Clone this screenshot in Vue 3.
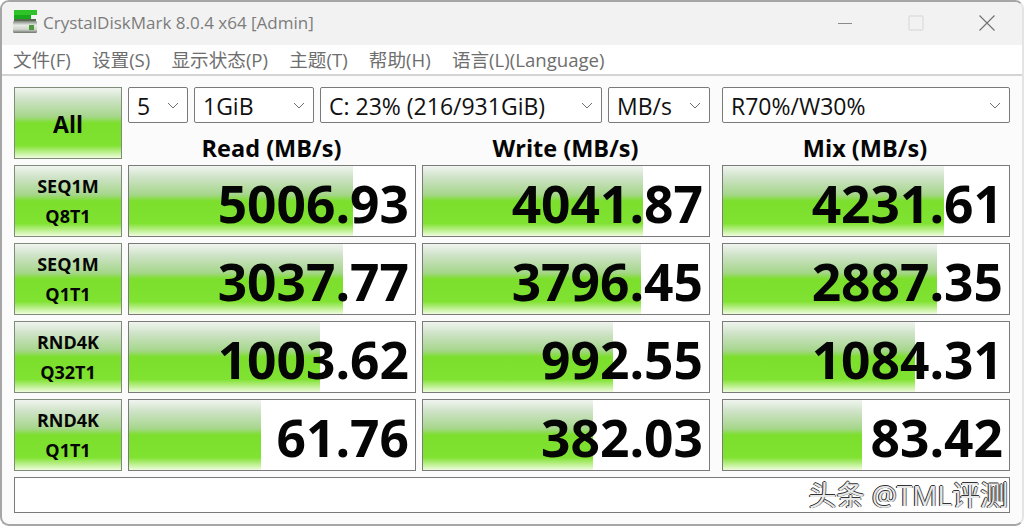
<template>
    <div class="window">
        <div class="titlebar">
            <svg class="appicon" width="26" height="24" viewBox="0 0 26 24">
                <defs>
                    <linearGradient id="drive" x1="0" y1="0" x2="0" y2="1">
                        <stop offset="0" stop-color="#7d857a" />
                        <stop offset="0.35" stop-color="#e8ebe6" />
                        <stop offset="0.7" stop-color="#cfd4cc" />
                        <stop offset="1" stop-color="#6f756d" />
                    </linearGradient>
                </defs>
                <rect x="0" y="11" width="24" height="12" rx="1.5" fill="url(#drive)" />
                <rect x="16" y="15" width="5" height="5" fill="#4f9a3c" />
                <rect x="1" y="9" width="22" height="2" fill="#5a6a52" />
                <rect x="1" y="0" width="23" height="5" fill="#2fc32a" />
                <rect x="1" y="5" width="17" height="4" fill="#18a81c" />
            </svg>
            <span class="title">CrystalDiskMark 8.0.4 x64 [Admin]</span>
            <div class="controls">
                <svg width="16" height="16" viewBox="0 0 16 16"><path d="M1 8.5h14" stroke="#8a8a8a" stroke-width="1.2" /></svg>
                <svg width="16" height="16" viewBox="0 0 16 16"><rect x="1" y="1" width="14" height="14" rx="1" fill="none" stroke="#dedede" stroke-width="1.4" /></svg>
                <svg width="16" height="16" viewBox="0 0 16 16"><path d="M0.5 0.5l15 15M15.5 0.5l-15 15" stroke="#707070" stroke-width="1.1" /></svg>
            </div>
        </div>
        <div class="menubar">
            <span v-for="item in menus" :key="item">{{ item }}</span>
        </div>
        <div class="content">
            <div class="grid">
                <div class="btn all"><span>All</span></div>
                <div class="selects-left">
                    <div v-for="s in selects" :key="s.text" class="select" :style="{ width: s.width + 'px' }">
                        <span>{{ s.text }}</span>
                        <svg width="12" height="7" viewBox="0 0 12 7"><path d="M1 1l5 5 5-5" fill="none" stroke="#707070" stroke-width="1" /></svg>
                    </div>
                </div>
                <div class="select last">
                    <span>R70%/W30%</span>
                    <svg width="12" height="7" viewBox="0 0 12 7"><path d="M1 1l5 5 5-5" fill="none" stroke="#707070" stroke-width="1" /></svg>
                </div>
                <div class="head">Read (MB/s)</div>
                <div class="head">Write (MB/s)</div>
                <div class="head last">Mix (MB/s)</div>
                <template v-for="row in rows" :key="row.a + row.b">
                    <div class="btn label">
                        <span>{{ row.a }}</span>
                        <span>{{ row.b }}</span>
                    </div>
                    <div v-for="(cell, i) in row.cells" :key="cell.v" class="value" :class="{ last: i === 2 }">
                        <div class="bar" :style="{ width: cell.w + 'px' }"></div>
                        <span>{{ cell.v }}</span>
                    </div>
                </template>
                <div class="status"><span class="mark">头条 @TML评测</span></div>
            </div>
        </div>
    </div>
</template>

<script setup>
const menus = ['文件(F)', '设置(S)', '显示状态(P)', '主题(T)', '帮助(H)', '语言(L)(Language)']

const selects = [
    { text: '5', width: 60 },
    { text: '1GiB', width: 120 },
    { text: 'C: 23% (216/931GiB)', width: 282 },
    { text: 'MB/s', width: 102 },
]

const rows = [
    { a: 'SEQ1M', b: 'Q8T1', cells: [{ v: '5006.93', w: 224 }, { v: '4041.87', w: 220 }, { v: '4231.61', w: 221 }] },
    { a: 'SEQ1M', b: 'Q1T1', cells: [{ v: '3037.77', w: 214 }, { v: '3796.45', w: 218 }, { v: '2887.35', w: 214 }] },
    { a: 'RND4K', b: 'Q32T1', cells: [{ v: '1003.62', w: 191 }, { v: '992.55', w: 190 }, { v: '1084.31', w: 192 }] },
    { a: 'RND4K', b: 'Q1T1', cells: [{ v: '61.76', w: 132 }, { v: '382.03', w: 170 }, { v: '83.42', w: 139 }] },
]
</script>

<style>
html, body {
    margin: 0;
    background: #fff;
}
</style>

<style scoped>
.window {
    box-sizing: border-box;
    width: 1024px;
    height: 526px;
    overflow: hidden;
    border: 2px solid #a6a6a6;
    border-right-color: #e4e4e4;
    border-radius: 9px;
    background: #fbfbfb;
    font-family: "Open Sans", "Noto Sans CJK SC", sans-serif;
}
.titlebar {
    height: 43px;
    padding-left: 11px;
    display: flex;
    align-items: center;
    background: #f2f2f2;
}
.appicon {
    margin-right: 4px;
    margin-top: -3px;
}
.title {
    font-size: 17px;
    color: #7c7c7c;
    margin-top: -3px;
}
.controls {
    margin-left: auto;
    margin-right: 27px;
    display: flex;
    gap: 55px;
    align-items: center;
    margin-top: -2px;
}
.menubar {
    height: 31px;
    box-sizing: border-box;
    padding: 0 0 2px 11px;
    display: flex;
    gap: 21.2px;
    align-items: center;
    background: #fff;
    border-bottom: 2px solid #d4d4d4;
    font-size: 18.6px;
    color: #6e6e6e;
}
.content {
    padding: 11px 12px 0;
}
.grid {
    display: grid;
    grid-template-columns: 108px 288px 288px 294px;
    grid-template-rows: 36px 30px repeat(4, 72px) 36px;
    gap: 6px;
}
.last {
    justify-self: end;
    width: 288px;
}
.btn {
    box-sizing: border-box;
    border: 1px solid #7f8c7a;
    background: linear-gradient(180deg, #f0f4ef 0%, #cfe3c8 16%, #a5d68a 41%, #7bdf2c 50%, #80e231 82%, #eefcdc 100%);
    color: #050505;
    font-weight: 700;
    display: flex;
    flex-direction: column;
    align-items: center;
    justify-content: center;
}
.all {
    grid-row: 1 / 3;
    font-size: 23px;
    padding-top: 1px;
}
.selects-left {
    grid-column: 2 / 4;
    display: flex;
    gap: 6px;
}
.select {
    box-sizing: border-box;
    height: 36px;
    padding: 1px 8px 0;
    display: flex;
    align-items: center;
    justify-content: space-between;
    border: 1px solid #7a7a7a;
    border-radius: 2px;
    background: #fff;
    font-size: 23px;
    color: #111;
}
.select svg {
    margin-top: -1px;
}
.head {
    font-size: 23.5px;
    font-weight: 700;
    color: #050505;
    text-align: center;
    line-height: 38px;
    height: 30px;
    padding-right: 1px;
}
.head:nth-child(4) {
    grid-column: 2;
}
.label {
    font-size: 18px;
    gap: 5px;
    line-height: 25px;
}
.value {
    position: relative;
    box-sizing: border-box;
    border: 1px solid #7a7a7a;
    background: #fff;
    text-align: right;
    padding-right: 6px;
    font-size: 51.5px;
    font-weight: 700;
    line-height: 74px;
    color: #050505;
}
.value span {
    position: relative;
}
.bar {
    position: absolute;
    left: 0;
    top: 0;
    bottom: 0;
    background: linear-gradient(180deg, #f0f4ef 0%, #cfe3c8 16%, #a5d68a 41%, #7bdf2c 50%, #80e231 82%, #eefcdc 100%);
}
.status {
    grid-column: 1 / 5;
    box-sizing: border-box;
    border: 1px solid #7a7a7a;
    background: #fff;
    display: flex;
    justify-content: flex-end;
    align-items: flex-end;
    padding-right: 1px;
    overflow: hidden;
}
.mark {
    font-size: 28px;
    line-height: 34px;
    color: #e8e8e8;
    text-shadow: -1px 0 0 #222, 0 -1px 0 #333, 1px 0 0 #777;
    white-space: nowrap;
}
</style>
